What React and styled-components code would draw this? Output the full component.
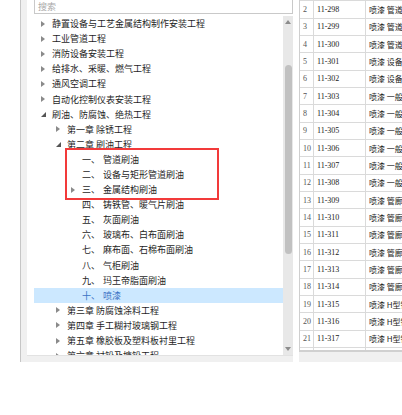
import React from 'react'
import styled, { createGlobalStyle } from 'styled-components'

const Global = createGlobalStyle`
  html, body { margin: 0; padding: 0; background: #fff; }
  body { width: 402px; height: 415px; overflow: hidden; }
`

const Page = styled.div`
  position: relative;
  display: flex;
  height: 362px;
  width: 402px;
  overflow: hidden;
  font-family: "Noto Sans CJK SC", "Noto Sans", sans-serif;
`

const Gutter = styled.div`
  width: 20px;
  flex: none;
`

const LeftPanel = styled.div`
  width: 266px;
  flex: none;
  border-left: 1px solid #c6c6c6;
  background: #f0f0f0;
  padding-left: 6px;
  display: flex;
  flex-direction: column;
`

const PanelInner = styled.div`
  background: #fff;
  flex: 1;
  display: flex;
  flex-direction: column;
  min-height: 0;
`

const Search = styled.div`
  margin-left: 7px;
  height: 14px;
  border: 1px solid #c9c9c9;
  border-top: none;
  display: flex;
  align-items: center;
  padding-left: 3px;
  font-size: 9px;
  color: #a8a8a8;
  box-sizing: border-box;
  flex: none;
`

const TreeBody = styled.div`
  margin-top: 2px;
  display: flex;
  height: 339px;
  flex: none;
`

const TreeList = styled.div`
  margin-left: 7px;
  flex: 1;
  overflow: hidden;
`

const Row = styled.div`
  height: 15.1px;
  display: flex;
  align-items: center;
  padding-left: ${p => 7 + p.$level * 15}px;
  background: ${p => (p.$selected ? '#cce8ff' : 'transparent')};
  color: ${p => (p.$selected ? '#3b72c4' : '#1e1e1e')};
  font-size: 9px;
  white-space: nowrap;
`

const ArrowBox = styled.span`
  width: 11px;
  flex: none;
  display: flex;
  align-items: center;
`

const Num = styled.span`
  margin-right: 3px;
`

const Scrollbar = styled.div`
  width: 10px;
  flex: none;
  background: #e8e8e8;
  display: flex;
  flex-direction: column;
  align-items: center;
  padding: 3px 0;
  box-sizing: border-box;
`

const ScrollArrow = styled.div`
  height: 6px;
  display: flex;
  align-items: center;
`

const Track = styled.div`
  flex: 1;
  width: 100%;
  display: flex;
  justify-content: center;
  padding-top: 40px;
  padding-bottom: 92px;
  box-sizing: border-box;
`

const Thumb = styled.div`
  width: 7px;
  background: #c1c1c1;
  border-radius: 4px;
  height: 100%;
`

const PanelFoot = styled.div`
  flex: 1;
  background: #f0f0f0;
  border-top: 1px solid #e2e2e2;
`

const Spacer = styled.div`
  width: 6px;
  flex: none;
`

const TablePanel = styled.div`
  flex: 1;
  display: flex;
  flex-direction: column;
  min-width: 0;
`

const TableClip = styled.div`
  height: 350px;
  overflow: hidden;
  flex: none;
  border-left: 1px solid #cfcfcf;
`

const TableRows = styled.div`
  margin-top: -16px;
`

const TRow = styled.div`
  display: grid;
  grid-template-columns: 14px 52px 1fr;
  height: 17.33px;
  box-sizing: border-box;
  border-bottom: 1px solid #dadada;
`

const Cell = styled.div`
  display: flex;
  align-items: center;
  padding-left: 3px;
  font-size: ${p => (p.$cjk ? 8 : 8)}px;
  font-family: ${p =>
    p.$cjk ? '"Noto Sans CJK SC", sans-serif' : '"Liberation Serif", "DejaVu Serif", serif'};
  color: ${p => (p.$muted ? '#555' : '#222')};
  border-right: ${p => (p.$last ? 'none' : '1px solid #dadada')};
  white-space: nowrap;
  overflow: hidden;
`

const HScroll = styled.div`
  flex: 1;
  background: #f0f0f0;
  border-top: 2px solid #d0d0d0;
`

const Highlight = styled.div`
  position: absolute;
  left: 65px;
  top: 148px;
  width: 154px;
  height: 52px;
  border: 2px solid #f23a3a;
  box-sizing: border-box;
  pointer-events: none;
`

function Arrow({ state }) {
  if (state === 'open') {
    return (
      <svg width="5" height="5" viewBox="0 0 5 5">
        <path d="M5 0 L5 5 L0 5 Z" fill="#555" />
      </svg>
    )
  }
  if (state === 'closed') {
    return (
      <svg width="4" height="6" viewBox="0 0 4 6">
        <path d="M0 0 L4 3 L0 6 Z" fill="#8a8a8a" />
      </svg>
    )
  }
  return null
}

const tree = [
  { level: 0, state: 'closed', text: '静置设备与工艺金属结构制作安装工程' },
  { level: 0, state: 'closed', text: '工业管道工程' },
  { level: 0, state: 'closed', text: '消防设备安装工程' },
  { level: 0, state: 'closed', text: '给排水、采暖、燃气工程' },
  { level: 0, state: 'closed', text: '通风空调工程' },
  { level: 0, state: 'closed', text: '自动化控制仪表安装工程' },
  { level: 0, state: 'open', text: '刷油、防腐蚀、绝热工程' },
  { level: 1, state: 'closed', text: '第一章 除锈工程' },
  { level: 1, state: 'open', text: '第二章 刷油工程' },
  { level: 2, num: '一、', text: '管道刷油' },
  { level: 2, num: '二、', text: '设备与矩形管道刷油' },
  { level: 2, state: 'closed', num: '三、', text: '金属结构刷油' },
  { level: 2, num: '四、', text: '铸铁管、暖气片刷油' },
  { level: 2, num: '五、', text: '灰面刷油' },
  { level: 2, num: '六、', text: '玻璃布、白布面刷油' },
  { level: 2, num: '七、', text: '麻布面、石棉布面刷油' },
  { level: 2, num: '八、', text: '气柜刷油' },
  { level: 2, num: '九、', text: '玛王帝脂面刷油' },
  { level: 2, num: '十、', text: '喷漆', selected: true },
  { level: 1, state: 'closed', text: '第三章 防腐蚀涂料工程' },
  { level: 1, state: 'closed', text: '第四章 手工糊衬玻璃钢工程' },
  { level: 1, state: 'closed', text: '第五章 橡胶板及塑料板衬里工程' },
  { level: 1, state: 'closed', text: '第六章 衬铅及搪铅工程' },
]

function descFor(n) {
  if (n <= 4) return '喷漆 管道刷油'
  if (n <= 6) return '喷漆 设备刷油'
  if (n <= 12) return '喷漆 一般钢结构'
  if (n <= 18) return '喷漆 管廊钢结构'
  return '喷漆 H型钢结构'
}

const rows = Array.from({ length: 22 }, (_, i) => {
  const n = i + 1
  return { n, code: `11-${296 + n}`, desc: descFor(n) }
})

export default function App() {
  return (
    <Page>
      <Global />
      <Gutter />
      <LeftPanel>
        <PanelInner>
          <Search>搜索</Search>
          <TreeBody>
            <TreeList>
              {tree.map((t, i) => (
                <Row key={i} $level={t.level} $selected={t.selected}>
                  <ArrowBox>
                    <Arrow state={t.state} />
                  </ArrowBox>
                  {t.num && <Num>{t.num}</Num>}
                  {t.text}
                </Row>
              ))}
            </TreeList>
            <Scrollbar>
              <ScrollArrow>
                <svg width="6" height="4" viewBox="0 0 6 4">
                  <path d="M0 4 L3 0 L6 4 Z" fill="#8c8c8c" />
                </svg>
              </ScrollArrow>
              <Track>
                <Thumb />
              </Track>
              <ScrollArrow>
                <svg width="6" height="4" viewBox="0 0 6 4">
                  <path d="M0 0 L3 4 L6 0 Z" fill="#8c8c8c" />
                </svg>
              </ScrollArrow>
            </Scrollbar>
          </TreeBody>
          <PanelFoot />
        </PanelInner>
      </LeftPanel>
      <Spacer />
      <TablePanel>
        <TableClip>
          <TableRows>
            {rows.map(r => (
              <TRow key={r.n}>
                <Cell $muted>{r.n}</Cell>
                <Cell>{r.code}</Cell>
                <Cell $cjk $last>{r.desc}</Cell>
              </TRow>
            ))}
          </TableRows>
        </TableClip>
        <HScroll />
      </TablePanel>
      <Highlight />
    </Page>
  )
}
